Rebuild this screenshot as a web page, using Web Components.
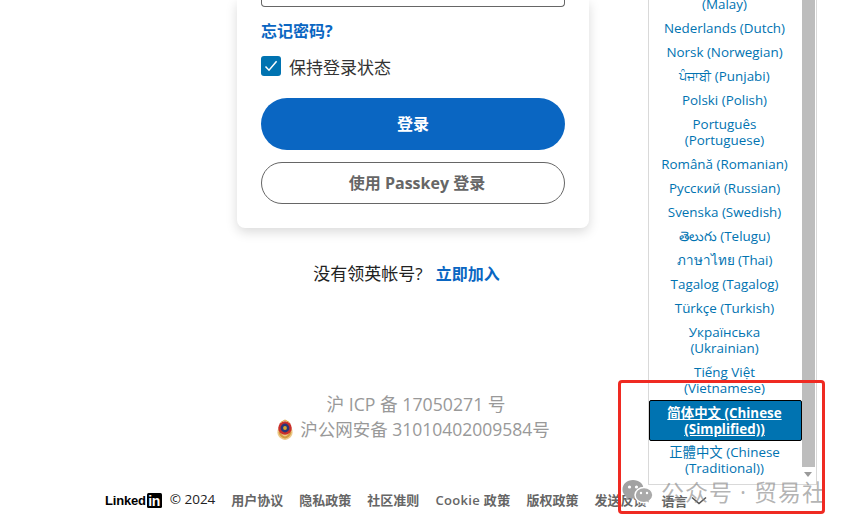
<!DOCTYPE html>
<html lang="zh-CN"><head><meta charset="utf-8"><title>登录</title>
<style>
html,body{margin:0;padding:0;background:#fff}
body{font-family:"Open Sans","Noto Sans CJK SC",sans-serif;width:851px;height:526px;overflow:hidden;position:relative}
</style></head><body>
<login-page></login-page>
<script>
const FONT='"Open Sans","Noto Sans CJK SC",sans-serif';
class LoginCard extends HTMLElement{constructor(){super();this.attachShadow({mode:'open'}).innerHTML=`<style>
:host{display:flex;flex-direction:column;box-sizing:border-box;width:352px;height:228px;padding:0 24px;background:#fff;border-radius:0 0 8px 8px;box-shadow:0 4px 12px rgba(0,0,0,.15);font-family:${FONT}}
.input{height:7px;box-sizing:border-box;border:1px solid #666;border-top:0;border-radius:0 0 4px 4px}
.forgot{margin-top:13px;height:22px;line-height:22px;font-size:16px;font-weight:700;color:#0a66c2}
.keep{display:flex;align-items:center;gap:8px;margin-top:12px;height:24px;font-size:17px;color:#333}
.box{width:20px;height:20px;background:#0073b1;border-radius:3px;display:flex;align-items:center;justify-content:center}
.btn{box-sizing:border-box;display:flex;align-items:center;justify-content:center;font-size:16px;font-weight:700;padding-bottom:2px}
.primary{margin-top:20px;height:52px;border-radius:26px;background:#0a66c2;color:#fff}
.second{margin-top:12px;height:42px;border-radius:21px;border:1px solid #666;color:#666;white-space:pre;padding-left:8px}
</style>
<div class="input"></div>
<div class="forgot">忘记密码?</div>
<div class="keep"><span class="box"><svg width="14" height="12" viewBox="0 0 14 12"><path d="M1.500 6.500 5 10.200 12.600 1.200" fill="none" stroke="#fff" stroke-width="1.500"/></svg></span><span>保持登录状态</span></div>
<div class="btn primary">登录</div>
<div class="btn second">使用 Passkey 登录</div>`}}
customElements.define('login-card',LoginCard);

class JoinLine extends HTMLElement{constructor(){super();this.attachShadow({mode:'open'}).innerHTML=`<style>
:host{display:flex;justify-content:center;gap:13px;margin-top:34px;padding-right:13px;height:24px;line-height:24px;font-size:17px;color:#222;font-family:${FONT}}
b{color:#0a66c2;font-weight:700;font-size:16px}
</style><span>没有领英帐号?</span><b>立即加入</b>`}}
customElements.define('join-line',JoinLine);

class IcpInfo extends HTMLElement{constructor(){super();this.attachShadow({mode:'open'}).innerHTML=`<style>
:host{display:flex;flex-direction:column;align-items:center;margin-top:106px;font-size:17.500px;line-height:25px;color:#999;font-family:${FONT}}
div{display:flex;align-items:center;gap:6px;height:25px;white-space:pre}
.a{padding-left:6px;font-size:17.700px}
</style><div class="a">沪 ICP 备 17050271 号</div>
<div><svg width="18" height="22" viewBox="0 0 18 22"><path d="M2 10c-2 5 1 10 7 11 6-1 9-6 7-11z" fill="#ecc98a"/><path d="M3.500 13c1 3.500 3 5 5.500 5.500 2.500-.5 4.500-2 5.500-5.500" fill="none" stroke="#d39b3f" stroke-width="2"/><circle cx="9" cy="9" r="6.800" fill="#c9302a"/><circle cx="9" cy="9" r="4.400" fill="#27367a"/><circle cx="9" cy="9" r="1.900" fill="#d9a62e"/><path d="M4.500 3.500 9 1l4.500 2.500" fill="none" stroke="#e0a43a" stroke-width="1"/></svg><span>沪公网安备 31010402009584号</span></div>`}}
customElements.define('icp-info',IcpInfo);

class SiteFooter extends HTMLElement{constructor(){super();this.attachShadow({mode:'open'}).innerHTML=`<style>
:host{display:flex;align-items:center;gap:16px;height:20px;padding-left:105px;margin-top:47px;font-size:13px;color:#666;font-weight:600;font-family:${FONT};white-space:pre}
.brand{display:flex;align-items:center;gap:8px;color:#222;font-weight:400;font-size:13.500px}
.logo{display:flex;align-items:center;color:#000;font:700 13px/15px "Liberation Sans",sans-serif;letter-spacing:-.2px;margin-top:3px}
.in{display:inline-flex;align-items:flex-end;justify-content:center;width:15px;height:15px;margin-left:1px;background:#000;color:#fff;border-radius:1.500px;font:700 14px/14px "Liberation Sans",sans-serif;letter-spacing:-.3px}
.ck{letter-spacing:.35px}
.lang{display:flex;align-items:center;gap:3px;margin-top:3px;margin-left:-1px}
</style>
<span class="brand"><span class="logo">Linked<span class="in">in</span></span><span>© 2024</span></span>
<span>用户协议</span><span>隐私政策</span><span>社区准则</span><span class="ck">Cookie 政策</span><span>版权政策</span><span>发送反馈</span>
<span class="lang">语言<svg width="16" height="9" viewBox="0 0 16 9"><path d="M1 1.500 8 7.500 15 1.500" fill="none" stroke="#555" stroke-width="1.600"/></svg></span>`}}
customElements.define('site-footer',SiteFooter);

class LangItem extends HTMLElement{constructor(){super();this.attachShadow({mode:'open'}).innerHTML=`<style>
:host{display:block;padding:4px 8px;text-align:center;font-size:13.400px;line-height:16px;color:#0073b1}
:host([selected]){box-sizing:border-box;height:41px;margin:0 -2px -1px 0;padding:4px 10px 4px 8px;background:#0073b1;border:1px solid #000;border-radius:2px;color:#fff;font-weight:700;text-decoration:underline}
:host([clipped]){margin-top:-4px;padding-top:0}
</style><slot></slot>`}}
customElements.define('lang-item',LangItem);

const LANGS=['(Malay)','Nederlands (Dutch)','Norsk (Norwegian)','ਪੰਜਾਬੀ (Punjabi)','Polski (Polish)','Português (Portuguese)','Română (Romanian)','Русский (Russian)','Svenska (Swedish)','తెలుగు (Telugu)','ภาษาไทย (Thai)','Tagalog (Tagalog)','Türkçe (Turkish)','Українська (Ukrainian)','Tiếng Việt (Vietnamese)','简体中文 (Chinese (Simplified))','正體中文 (Chinese (Traditional))'];
class LangMenu extends HTMLElement{constructor(){super();this.attachShadow({mode:'open'}).innerHTML=`<style>
:host{position:absolute;left:648px;top:0;width:169px;height:485px;box-sizing:border-box;display:flex;background:#fff;border:1px solid #d9d9d9;border-top:0;font-family:${FONT};overflow:hidden}
.list{flex:1;min-width:0;padding-right:2px}
.bar{width:14px;flex:none;display:flex;flex-direction:column}
.thumb{height:467px;width:13px;background:#bdbdbd}
.arrow{margin:5px 0 0 2px;width:0;height:0;border:4px solid transparent;border-top:5px solid #9a9a9a;border-bottom:0}
</style><div class="list"></div><div class="bar"><div class="thumb"></div><div class="arrow"></div></div>`;
const l=this.shadowRoot.querySelector('.list');
LANGS.forEach((t,i)=>{const e=document.createElement('lang-item');e.textContent=t;if(i==0)e.setAttribute('clipped','');if(i==15)e.setAttribute('selected','');l.append(e)})}}
customElements.define('lang-menu',LangMenu);

class WaterMark extends HTMLElement{constructor(){super();this.attachShadow({mode:'open'}).innerHTML=`<style>
:host{position:absolute;left:622px;top:477px;display:flex;align-items:center;gap:7px;height:28px;font-size:23px;letter-spacing:1px;color:rgba(130,130,130,.6);font-family:${FONT};white-space:pre}
</style><svg width="32" height="28" viewBox="0 0 32 28"><path d="M11 3C5 3 .500 7 .500 12.500c0 3 1.500 5.500 4 7.200l-.8 3 3.600-1.700c1.300.4 2.500.6 3.700.6 6 0 10.500-4.200 10.500-9.600S17 3 11 3z" fill="#a2a2a2"/><circle cx="7.500" cy="10" r="1.600" fill="#fff"/><circle cx="14.500" cy="10" r="1.600" fill="#fff"/><path d="M22 10.500c-5 0-9 3.400-9 7.600s4 7.600 9 7.600c1 0 2-.2 3-.5l3.200 1.600-.8-2.800c2-1.400 3.600-3.500 3.600-5.900 0-4.200-4-7.600-9-7.600z" fill="#aaa" stroke="#fff" stroke-width="1.500"/><circle cx="19" cy="16" r="1.200" fill="#fff"/><circle cx="25" cy="16" r="1.200" fill="#fff"/></svg><span>公众号 · 贸易社</span>`}}
customElements.define('water-mark',WaterMark);

class RedFrame extends HTMLElement{constructor(){super();this.attachShadow({mode:'open'}).innerHTML=`<style>
:host{position:absolute;left:618px;top:380px;width:207px;height:134px;box-sizing:border-box;border:3px solid #ef2a22;border-radius:4px}
</style>`}}
customElements.define('red-frame',RedFrame);

class LoginPage extends HTMLElement{constructor(){super();this.attachShadow({mode:'open'}).innerHTML=`<style>
:host{display:block;height:526px}
main{width:826px;display:flex;flex-direction:column;align-items:center}
</style><main><login-card></login-card><join-line></join-line><icp-info></icp-info></main><site-footer></site-footer><lang-menu></lang-menu><water-mark></water-mark><red-frame></red-frame>`}}
customElements.define('login-page',LoginPage);
</script></body></html>
